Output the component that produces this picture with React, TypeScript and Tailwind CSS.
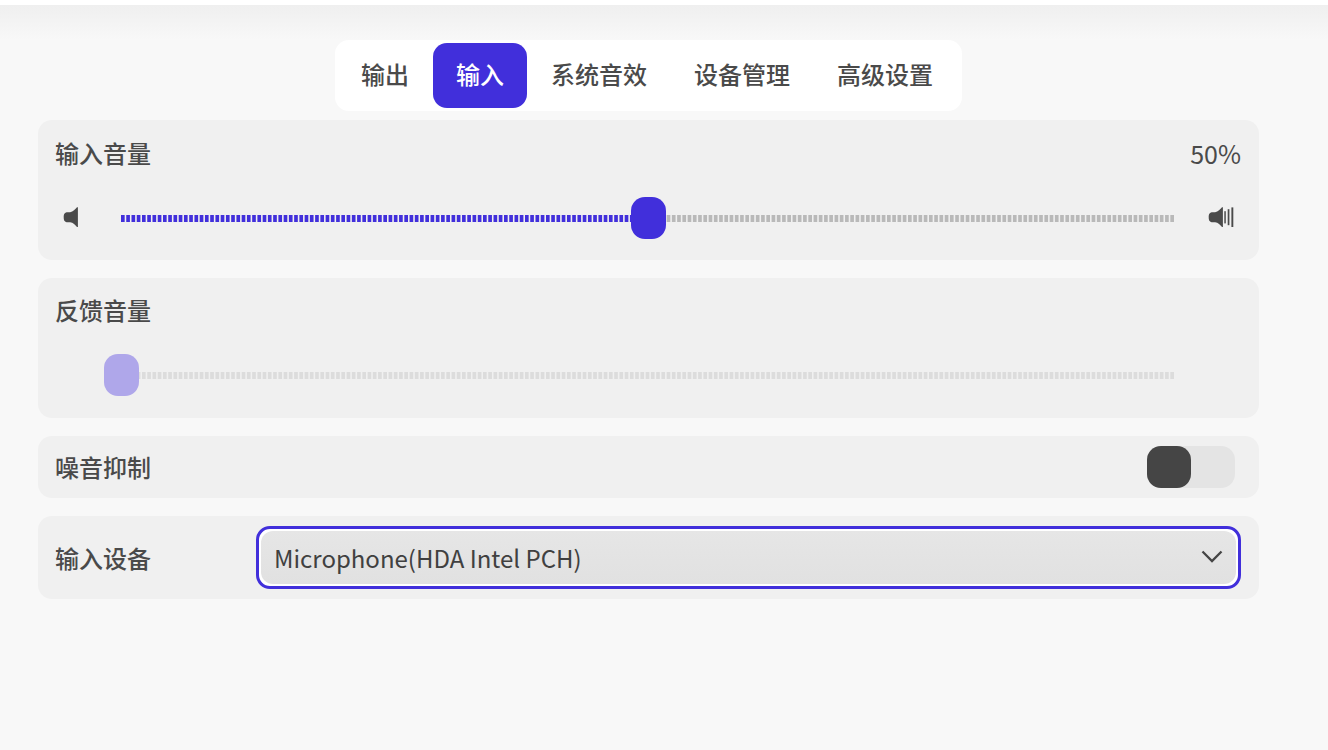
import { useState } from "react";

const TABS = ["输出", "输入", "系统音效", "设备管理", "高级设置"];

const CARD = "rounded-[14px] bg-[#f0f0f0]";

// 201 ticks and the 200 gaps between them
const TICK = 7;
const GAP = 3;
const TRACK_LENGTH = 201 * TICK + 200 * GAP;

function SpeakerLow() {
  return (
    <svg width="28" height="22" viewBox="-0.5 0.8 28 22" fill="#4a4a4a" aria-hidden="true">
      <path d="M1.2 11c0-3.6 1.1-5 4.2-5h2.2C10.600 5.600 12.800 3.200 14.500 1.100h.9v19.700h-.9c-1.700-2.100-3.900-4.500-6.900-4.800H5.400c-3.100 0-4.200-1.400-4.200-5z" />
    </svg>
  );
}

function SpeakerHigh() {
  return (
    <svg width="28" height="22" viewBox="-0.5 0.8 28 22" fill="#4a4a4a" aria-hidden="true">
      <path d="M1.2 11c0-3.6 1.1-5 4.2-5h2.2C10.600 5.600 12.800 3.200 14.500 1.100h.9v19.700h-.9c-1.700-2.100-3.900-4.500-6.900-4.800H5.400c-3.100 0-4.200-1.400-4.200-5z" />
      <rect x="16.800" y="5" width="1.500" height="12.200" />
      <rect x="20.200" y="3" width="1.700" height="16" />
      <rect x="23.900" y="1.200" width="1.900" height="19.600" />
    </svg>
  );
}

type VolumeSliderProps = {
  id: string;
  value: number;
  disabled?: boolean;
  onChange: (value: number) => void;
};

function VolumeSlider({ id, value, disabled = false, onChange }: VolumeSliderProps) {
  const line = {
    x1: "0",
    y1: "3.5",
    x2: "100%",
    y2: "3.5",
    strokeWidth: 7,
    pathLength: TRACK_LENGTH,
    strokeDasharray: `${TICK} ${GAP}`,
  };
  return (
    <div className="grid flex-1 items-center">
      <div className="col-start-1 row-start-1 pr-[18px] pl-[17px]">
        <svg className="block h-[7px] w-full" aria-hidden="true">
          <line
            {...line}
            stroke={disabled ? "#dcdcdc" : "#b9b9b9"}
            style={{ clipPath: `inset(0 0 0 ${value}%) view-box` }}
          />
          <line
            {...line}
            stroke="#412fdb"
            style={{ clipPath: `inset(0 ${100 - value}% 0 0) view-box` }}
          />
        </svg>
      </div>
      <input
        id={id}
        type="range"
        min={0}
        max={100}
        value={value}
        disabled={disabled}
        onChange={(e) => onChange(Number(e.target.value))}
        className="z-10 col-start-1 row-start-1 h-[42px] w-full appearance-none bg-transparent outline-none [&::-webkit-slider-thumb]:h-[42px] [&::-webkit-slider-thumb]:w-[35px] [&::-webkit-slider-thumb]:appearance-none [&::-webkit-slider-thumb]:rounded-[14px] [&::-webkit-slider-thumb]:bg-[#412fdb] disabled:[&::-webkit-slider-thumb]:bg-[#afa7ea]"
      />
    </div>
  );
}

export default function App() {
  const [tab, setTab] = useState("输入");
  const [volume, setVolume] = useState(50);
  const [feedback, setFeedback] = useState(0);
  const [suppress, setSuppress] = useState(false);

  return (
    <div className="min-h-screen border-t-[5px] border-white bg-[#f8f8f8] bg-[linear-gradient(#efefef,#f8f8f8)] bg-[length:100%_35px] bg-no-repeat pt-[35px] pr-[69px] pl-[38px] font-['Noto_Sans_CJK_SC',sans-serif] text-[24px] leading-[36px] font-medium text-[#4a4a4a]">
      <div
        role="tablist"
        className="mx-auto flex h-[71px] w-fit gap-px rounded-[14px] bg-white py-[3px] pr-[6px] pl-[3px]"
      >
        {TABS.map((name) => (
          <button
            key={name}
            type="button"
            role="tab"
            aria-selected={tab === name}
            onClick={() => setTab(name)}
            className={`rounded-[14px] px-[23px] pb-[3px] ${
              tab === name ? "bg-[#412fdb] text-white" : ""
            }`}
          >
            {name}
          </button>
        ))}
      </div>

      <main className="mt-[9px] flex flex-col gap-[18px]">
        <section className={`${CARD} px-[17px] pt-[15px] pb-[21px]`}>
          <div className="flex items-center justify-between">
            <label htmlFor="input-volume">输入音量</label>
            <output htmlFor="input-volume" className="pr-px text-[25px] font-normal">
              {volume}%
            </output>
          </div>
          <div className="mt-[26px] flex items-center px-[7px]">
            <SpeakerLow />
            <div className="flex flex-1 pr-[15px] pl-[14px]">
              <VolumeSlider id="input-volume" value={volume} onChange={setVolume} />
            </div>
            <SpeakerHigh />
          </div>
        </section>

        <section className={`${CARD} px-[17px] pt-[14px] pb-[22px]`}>
          <label htmlFor="feedback-volume" className="block">
            反馈音量
          </label>
          <div className="mt-[26px] flex pr-[50px] pl-[49px]">
            <VolumeSlider id="feedback-volume" value={feedback} disabled onChange={setFeedback} />
          </div>
        </section>

        <section className={`${CARD} flex items-center justify-between py-[10px] pr-6 pl-[17px]`}>
          <label htmlFor="noise">噪音抑制</label>
          <input
            id="noise"
            type="checkbox"
            role="switch"
            checked={suppress}
            onChange={(e) => setSuppress(e.target.checked)}
            className="flex h-[42px] w-[88px] appearance-none rounded-[14px] bg-[#e4e4e4] before:h-full before:w-1/2 before:rounded-[14px] before:bg-[#454545] checked:justify-end checked:before:bg-[#412fdb]"
          />
        </section>

        <section className={`${CARD} flex items-center py-[10px] pr-[18px] pl-[17px]`}>
          <label htmlFor="device" className="w-[201px]">
            输入设备
          </label>
          <div className="relative flex-1 rounded-[14px] border-[3px] border-[#412fdb] bg-white p-[2px]">
            <select
              id="device"
              className="block h-[53px] w-full appearance-none rounded-[12px] bg-linear-to-b from-[#e6e6e6] to-[#e1e1e1] pr-12 pl-[13px] font-normal text-[#404040] outline-none"
            >
              <option>Microphone(HDA Intel PCH)</option>
            </select>
            <svg
              className="pointer-events-none absolute top-[21px] right-[15px]"
              width="22"
              height="14"
              viewBox="0 0 22 14"
              fill="none"
              stroke="#454545"
              strokeWidth="2.3"
              aria-hidden="true"
            >
              <path d="M1.500 1.500l9.500 9.500L20.500 1.500" />
            </svg>
          </div>
        </section>
      </main>
    </div>
  );
}
